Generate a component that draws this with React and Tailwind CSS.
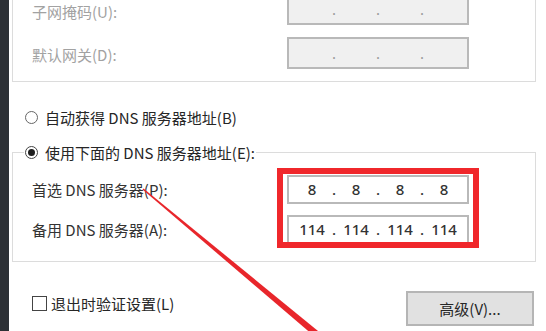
import React, { Fragment } from "react";

function Ip({ vals, cls }) {
  return (
    <div className={cls}>
      {[0, 1, 2, 3].map((i) => (
        <Fragment key={i}>
          {i > 0 && (
            <span
              className={
                vals
                  ? "w-[6px] text-center text-[#333]"
                  : "w-[6px] text-center text-[#9a9a9a]"
              }
            >
              .
            </span>
          )}
          <span className="w-[38px] text-center">{vals ? vals[i] : ""}</span>
        </Fragment>
      ))}
    </div>
  );
}

const disabledIp =
  "w-[182px] h-[32px] shrink-0 flex items-center px-[4px] border-2 border-[#b9b9b9] bg-[#f0f0f0] font-['Noto_Sans',sans-serif]";
const activeIp =
  "w-[182px] h-[29px] shrink-0 flex items-center px-[4px] border-2 border-[#b9b9b9] bg-white text-[#333] font-['Noto_Sans',sans-serif] font-medium text-[15px]";

export default function App() {
  return (
    <div className="w-[546px] h-[331px] overflow-hidden flex relative font-['Noto_Sans_CJK_SC','Noto_Sans',sans-serif] text-[15px] leading-none">
      <div className="w-[9px] shrink-0 bg-[#2c3035]" />
      <div className="flex-1 bg-white pl-[3px] pr-[10px] flex flex-col">
        {/* group 1 */}
        <div className="-mt-[14px] border border-[#dcdcdc] pt-[6px] pb-[12px] flex flex-col gap-[12px]">
          <div className="flex items-center">
            <div className="w-[274px] shrink-0 pl-[19px] text-[#a2a2a2] pt-[5px]">子网掩码(U):</div>
            <Ip cls={disabledIp} />
          </div>
          <div className="flex items-center">
            <div className="w-[274px] shrink-0 pl-[19px] text-[#a2a2a2] pt-[2px]">默认网关(D):</div>
            <Ip cls={disabledIp} />
          </div>
        </div>

        {/* radio 1 */}
        <div className="mt-[25px] h-[20px] flex items-center pl-[13px] text-[#262626]">
          <span className="w-[13px] h-[13px] rounded-full border border-[#666] bg-white shrink-0" />
          <span className="ml-[7px]">自动获得 DNS 服务器地址(B)</span>
        </div>

        {/* group 2 */}
        <fieldset className="mt-[15px] border border-[#dcdcdc] pb-[17px] flex flex-col">
          <legend className="ml-[11px] px-[1px]">
            <span className="h-[20px] flex items-center text-[#262626]">
              <span className="w-[13px] h-[13px] rounded-full border border-[#444] bg-white shrink-0 flex items-center justify-center">
                <span className="w-[7px] h-[7px] rounded-full bg-[#1e1e1e]" />
              </span>
              <span className="ml-[7px]">使用下面的 DNS 服务器地址(E):</span>
            </span>
          </legend>
          <div className="mt-[13px] flex flex-col gap-[11px]">
            <div className="flex items-center">
              <div className="w-[274px] shrink-0 pl-[19px] text-[#333]">首选 DNS 服务器(P):</div>
              <Ip cls={activeIp} vals={["8", "8", "8", "8"]} />
            </div>
            <div className="flex items-center">
              <div className="w-[274px] shrink-0 pl-[19px] text-[#333]">备用 DNS 服务器(A):</div>
              <Ip cls={activeIp} vals={["114", "114", "114", "114"]} />
            </div>
          </div>
        </fieldset>

        {/* bottom row */}
        <div className="mt-[29px] flex justify-between items-start">
          <div className="mt-[2px] h-[20px] flex items-center pl-[20px] text-[#262626]">
            <span className="w-[15px] h-[15px] border border-[#444] bg-white shrink-0" />
            <span className="ml-[4px]">退出时验证设置(L)</span>
          </div>
          <button className="w-[128px] h-[35px] mr-[2px] bg-[#e1e1e1] border-2 border-[#b5b5b5] text-[#262626] flex items-center justify-center">
            高级(V)...
          </button>
        </div>
      </div>

      {/* red highlight box */}
      <div className="absolute left-[277px] top-[168px] w-[202px] h-[80px] border-[6px] border-[#f0272b]" />

      {/* red arrow line */}
      <svg className="absolute inset-0 pointer-events-none" width="546" height="331" viewBox="0 0 546 331">
        <polygon
          points="143.5,188.4 339.2,348.3 334.8,353.7 142.5,189.6"
          fill="#e8262b"
        />
      </svg>
    </div>
  );
}
